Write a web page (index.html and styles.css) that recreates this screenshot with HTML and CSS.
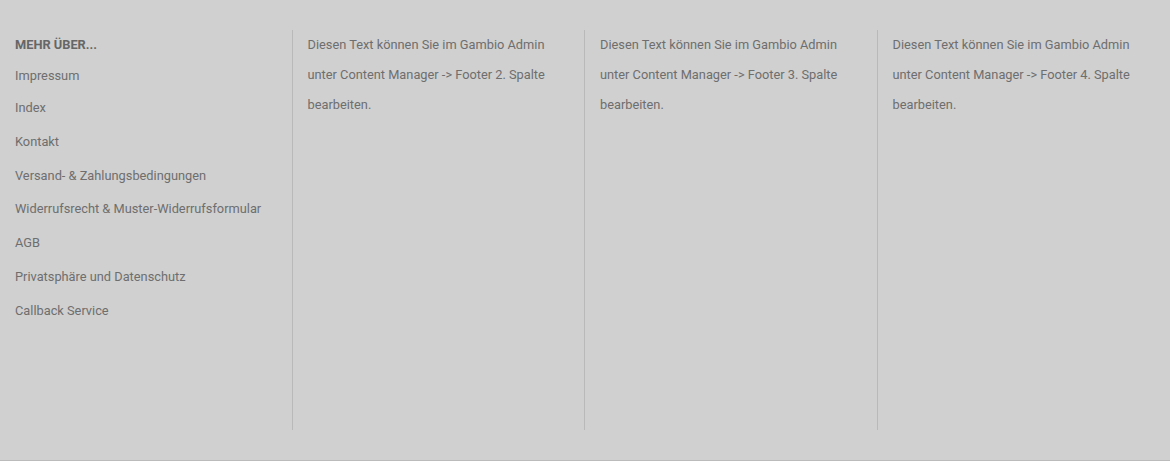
FILE: index.html
```html
<!DOCTYPE html>
<html lang="de">
<head>
<meta charset="utf-8">
<title>Footer</title>
<link rel="stylesheet" href="styles.css">
</head>
<body>
<footer class="footer">
  <div class="row">
    <div class="col col-bordered">
      <h4 class="col-title">MEHR ÜBER...</h4>
      <ul class="links">
        <li><a href="#">Impressum</a></li>
        <li><a href="#">Index</a></li>
        <li><a href="#">Kontakt</a></li>
        <li><a href="#">Versand- &amp; Zahlungsbedingungen</a></li>
        <li><a href="#">Widerrufsrecht &amp; Muster-Widerrufsformular</a></li>
        <li><a href="#">AGB</a></li>
        <li><a href="#">Privatsphäre und Datenschutz</a></li>
        <li><a href="#">Callback Service</a></li>
      </ul>
    </div>
    <div class="col col-bordered">
      <p class="col-text">Diesen Text können Sie im Gambio Admin unter Content Manager -&gt; Footer 2. Spalte bearbeiten.</p>
    </div>
    <div class="col col-bordered">
      <p class="col-text">Diesen Text können Sie im Gambio Admin unter Content Manager -&gt; Footer 3. Spalte bearbeiten.</p>
    </div>
    <div class="col">
      <p class="col-text">Diesen Text können Sie im Gambio Admin unter Content Manager -&gt; Footer 4. Spalte bearbeiten.</p>
    </div>
  </div>
</footer>
</body>
</html>
```

FILE: styles.css
```css
html, body {
  margin: 0;
  padding: 0;
  background: #d0d0d0;
}

body {
  font-family: Roboto, "Liberation Sans", Arial, sans-serif;
  font-size: 12.8px;
  color: #6e6e6e;
}

.footer {
  background: #d0d0d0;
  padding: 30px 0 0;
  box-sizing: border-box;
  border-bottom: 1px solid #bbbbbb;
  height: 461px;
}

.row {
  display: grid;
  grid-template-columns: repeat(4, 1fr);
  height: 400px;
}

.col {
  padding: 0 15px;
  min-width: 0;
}

.col-bordered {
  border-right: 1px solid #b9b9b9;
  padding-right: 14px;
}

.col-title {
  margin: 0;
  font-size: 12.8px;
  font-weight: 700;
  line-height: 30px;
  color: #666666;
}

.links {
  list-style: none;
  margin: 1px 0 0;
  padding: 0;
}

.links li {
  line-height: 33.8px;
}

.links li:first-child {
  line-height: 30px;
}

.links a {
  color: #6e6e6e;
  text-decoration: none;
}

.col-text {
  margin: 0;
  line-height: 30px;
  color: #6e6e6e;
}
```
